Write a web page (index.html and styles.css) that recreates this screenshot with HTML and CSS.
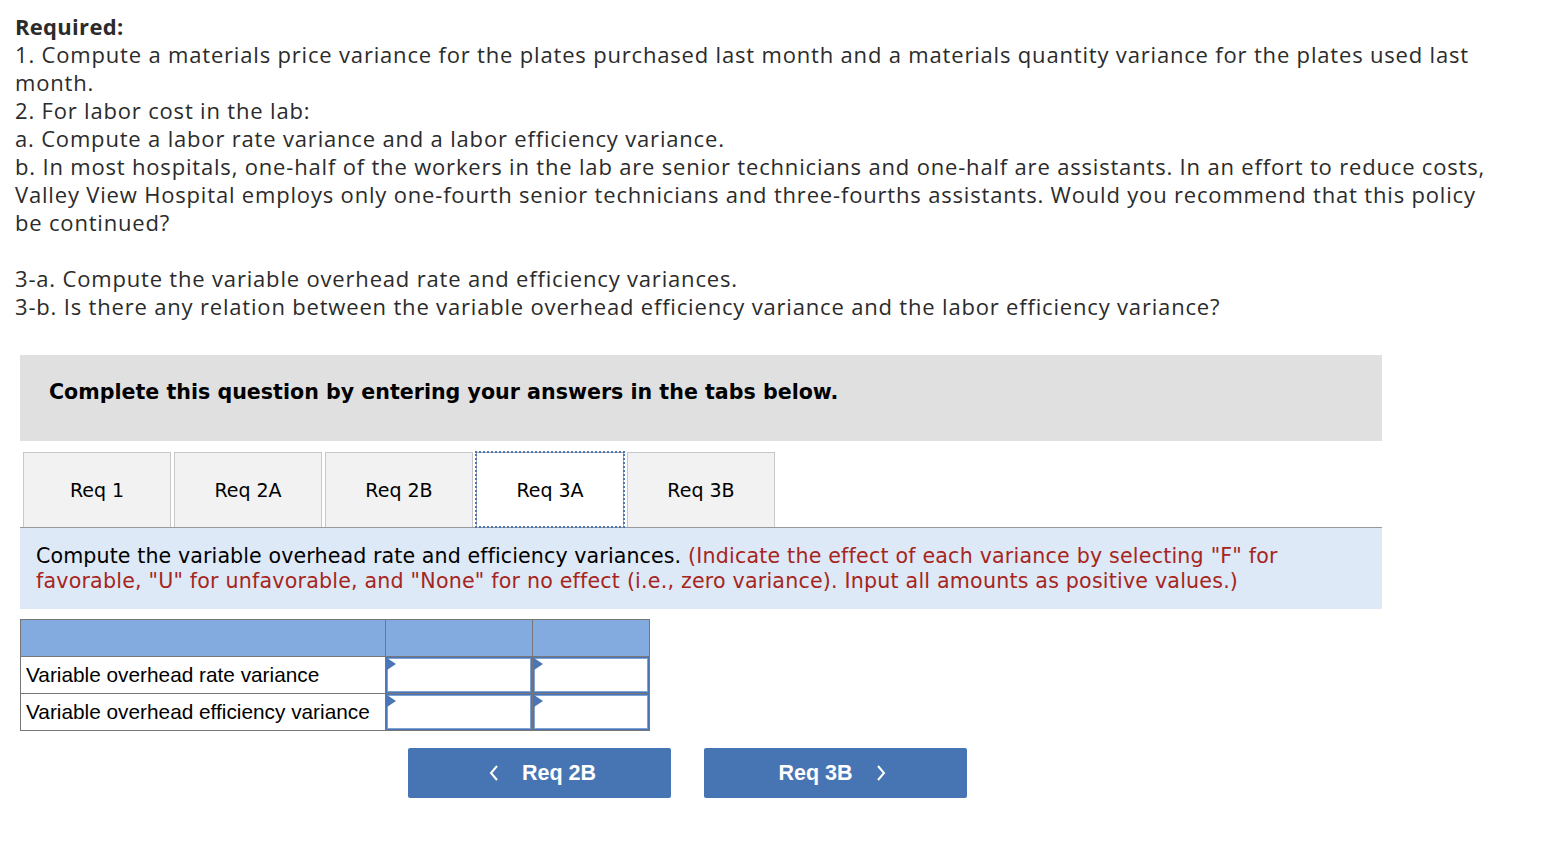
FILE: index.html
```html
<!DOCTYPE html>
<html>
<head>
<meta charset="utf-8">
<link rel="stylesheet" href="styles.css">
</head>
<body>
<div class="required">
  <div class="req-title">Required:</div>
  <div>1. Compute a materials price variance for the plates purchased last month and a materials quantity variance for the plates used last<br>month.</div>
  <div>2. For labor cost in the lab:</div>
  <div>a. Compute a labor rate variance and a labor efficiency variance.</div>
  <div>b. In most hospitals, one-half of the workers in the lab are senior technicians and one-half are assistants. In an effort to reduce costs,<br>Valley View Hospital employs only one-fourth senior technicians and three-fourths assistants. Would you recommend that this policy<br>be continued?</div>
  <div class="blank">&nbsp;</div>
  <div>3-a. Compute the variable overhead rate and efficiency variances.</div>
  <div>3-b. Is there any relation between the variable overhead efficiency variance and the labor efficiency variance?</div>
</div>

<div class="section">
  <div class="banner">Complete this question by entering your answers in the tabs below.</div>
  <div class="tabs">
    <div class="tab">Req 1</div>
    <div class="tab">Req 2A</div>
    <div class="tab">Req 2B</div>
    <div class="tab active">Req 3A</div>
    <div class="tab">Req 3B</div>
  </div>
  <div class="instructions">Compute the variable overhead rate and efficiency variances. <span class="red">(Indicate the effect of each variance by selecting "F" for<br>favorable, "U" for unfavorable, and "None" for no effect (i.e., zero variance). Input all amounts as positive values.)</span></div>

  <table class="grid">
    <tr class="head"><td class="c1"></td><td class="c2"></td><td class="c3"></td></tr>
    <tr><td class="c1 label">Variable overhead rate variance</td><td class="c2 input"><span class="flag"></span></td><td class="c3 input"><span class="flag"></span></td></tr>
    <tr><td class="c1 label">Variable overhead efficiency variance</td><td class="c2 input"><span class="flag"></span></td><td class="c3 input"><span class="flag"></span></td></tr>
  </table>

  <div class="nav">
    <div class="btn prev"><span class="chev">
      <svg width="12" height="18" viewBox="0 0 12 18"><path d="M9 2 L3 9 L9 16" fill="none" stroke="#fff" stroke-width="2"/></svg>
    </span><span>Req 2B</span></div>
    <div class="btn next"><span>Req 3B</span><span class="chev">
      <svg width="12" height="18" viewBox="0 0 12 18"><path d="M3 2 L9 9 L3 16" fill="none" stroke="#fff" stroke-width="2"/></svg>
    </span></div>
  </div>
</div>
</body>
</html>
```

FILE: styles.css
```css
html, body {
  margin: 0;
  padding: 0;
  background: #fff;
}

.required {
  padding: 12px 0 0 15px;
  font-family: "Open Sans", "Liberation Sans", sans-serif;
  font-size: 22px;
  letter-spacing: 0.82px;
  line-height: 28px;
  color: #2b2b2b;
}

.req-title {
  font-weight: 700;
  letter-spacing: 0.3px;
}

.section {
  margin: 35px 0 0 20px;
  width: 1362px;
}

.banner {
  background: #e0e0e0;
  height: 86px;
  box-sizing: border-box;
  padding: 24px 0 0 29px;
  line-height: 26px;
  font-family: "DejaVu Sans", Verdana, sans-serif;
  font-weight: 700;
  font-size: 20.6px;
  color: #000;
}

.tabs {
  display: flex;
  margin-top: 11px;
  padding-left: 3px;
  gap: 3px;
  border-bottom: 1px solid #999;
}

.tab {
  width: 148px;
  height: 75px;
  box-sizing: border-box;
  background: #f2f2f2;
  border: 1px solid #c8c8c8;
  border-bottom: none;
  display: flex;
  align-items: center;
  justify-content: center;
  font-family: "DejaVu Sans", Verdana, sans-serif;
  font-size: 19px;
  color: #000;
}

.tab.active {
  background: #fff;
  outline: 2px dotted #4a76b8;
  outline-offset: -1px;
  border-color: #aaa;
}

.instructions {
  background: #dde9f7;
  padding: 16px 16px 15px 16px;
  font-family: "DejaVu Sans", Verdana, sans-serif;
  font-size: 20.6px;
  letter-spacing: 0.1px;
  line-height: 25px;
  color: #000;
}

.red {
  color: #a62520;
  letter-spacing: 0.2px;
}

.grid {
  margin-top: 10px;
  border-collapse: collapse;
  font-family: "Liberation Sans", Arial, sans-serif;
  font-size: 20.8px;
  color: #000;
}

.grid td {
  border: 1px solid #777;
  height: 37px;
  padding: 0;
  box-sizing: border-box;
}

.grid .c1 { width: 365px; }
.grid .c2 { width: 147px; }
.grid .c3 { width: 117px; }

.grid .head td {
  background: #84abdf;
}

.grid .label {
  padding-left: 5px;
  background: #fff;
}

.grid .input {
  position: relative;
  background: #fff;
  box-shadow: inset 0 0 0 1px #4a76b8, inset 0 0 0 2px #7fa1d4;
}

.flag {
  position: absolute;
  left: 1px;
  top: 1px;
  width: 0;
  height: 0;
  border-top: 6px solid transparent;
  border-bottom: 6px solid transparent;
  border-left: 9px solid #4a76b8;
}

.nav {
  display: flex;
  gap: 33px;
  margin-top: 17px;
  padding-left: 388px;
}

.btn {
  width: 263px;
  height: 50px;
  box-sizing: border-box;
  background: #4775b3;
  border-radius: 2px;
  display: flex;
  align-items: center;
  justify-content: center;
  gap: 22px;
  font-family: "Liberation Sans", Arial, sans-serif;
  font-weight: 700;
  font-size: 21.5px;
  color: #fff;
}

.btn.prev {
  padding-left: 5px;
}

.btn.next {
  padding-right: 6px;
}

.chev {
  display: flex;
  align-items: center;
}
```
